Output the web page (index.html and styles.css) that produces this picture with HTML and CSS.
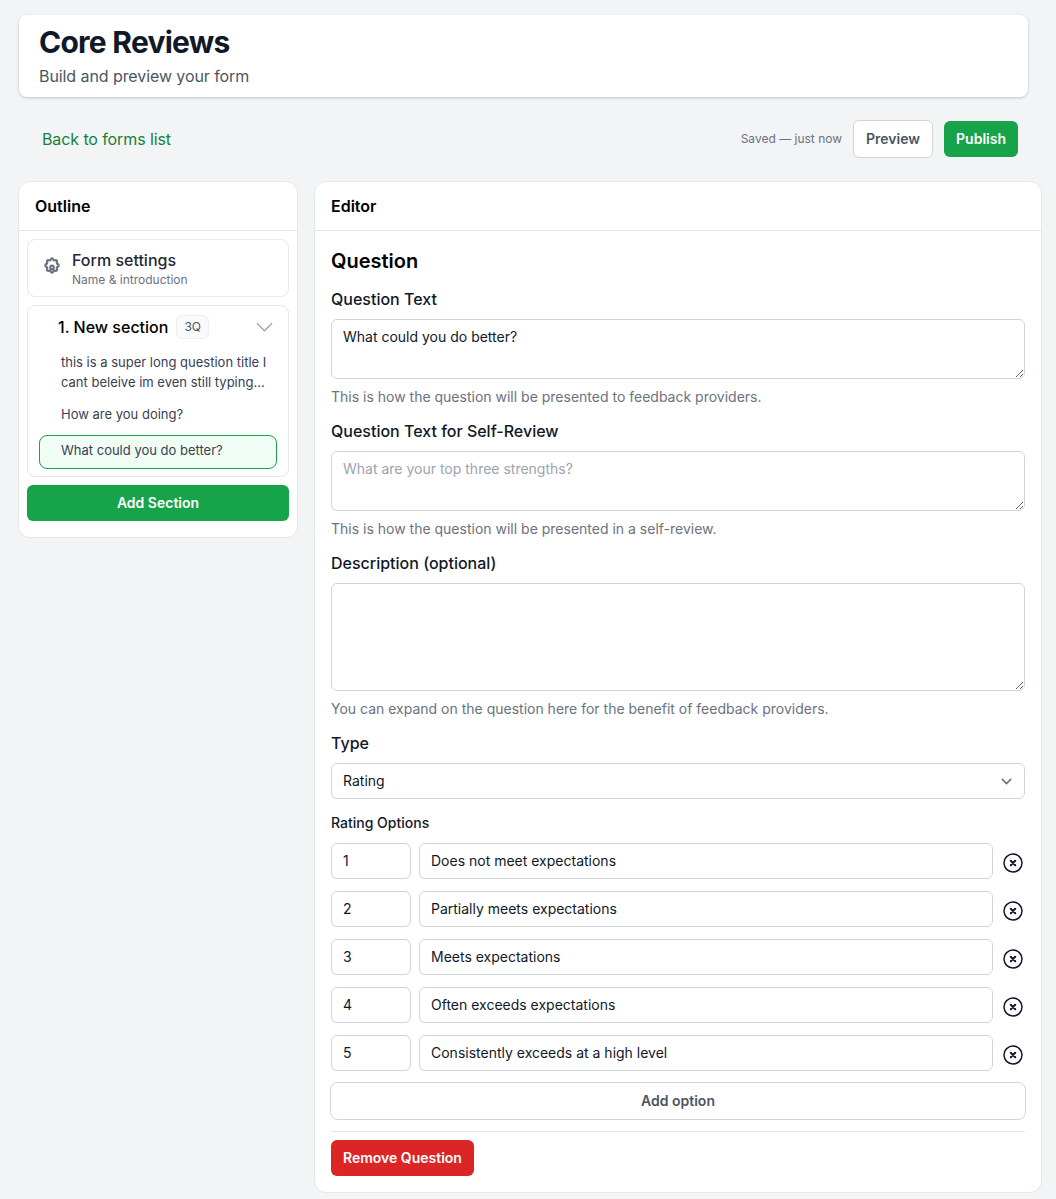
FILE: index.html
```html
<!DOCTYPE html>
<html lang="en">

<head>
    <meta charset="UTF-8">
    <meta name="viewport" content="width=device-width, initial-scale=1.0">
    <title>Core Reviews</title>

    <link rel="stylesheet" href="styles.css">
</head>

<body>
    <header class="page-head">
        <h1>Core Reviews</h1>
        <p>Build and preview your form</p>
    </header>

    <div class="toolbar">
        <a href="#" class="back-link">Back to forms list</a>
        <div class="toolbar-actions">
            <span class="saved">Saved — just now</span>
            <button class="btn btn-white">Preview</button>
            <button class="btn btn-green">Publish</button>
        </div>
    </div>

    <div class="columns">
        <aside class="card outline">
            <div class="card-head">Outline</div>
            <div class="outline-body">
                <div class="settings-item">
                    <svg class="gear" viewBox="0 0 24 24" preserveAspectRatio="none" fill="none" stroke="#6b7280" stroke-width="2.8" stroke-linecap="round" stroke-linejoin="round">
                        <path d="M10.325 4.317c.426-1.756 2.924-1.756 3.35 0a1.724 1.724 0 002.573 1.066c1.543-.94 3.31.826 2.37 2.37a1.724 1.724 0 001.065 2.572c1.756.426 1.756 2.924 0 3.35a1.724 1.724 0 00-1.066 2.573c.94 1.543-.826 3.31-2.37 2.37a1.724 1.724 0 00-2.572 1.065c-.426 1.756-2.924 1.756-3.35 0a1.724 1.724 0 00-2.573-1.066c-1.543.94-3.31-.826-2.37-2.37a1.724 1.724 0 00-1.065-2.572c-1.756-.426-1.756-2.924 0-3.35a1.724 1.724 0 001.066-2.573c-.94-1.543.826-3.31 2.37-2.37.996.608 2.296.07 2.572-1.065z"/>
                        <circle cx="12" cy="14.5" r="2.4"/>
                    </svg>
                    <div>
                        <div class="settings-title">Form settings</div>
                        <div class="settings-sub">Name &amp; introduction</div>
                    </div>
                </div>

                <div class="section-item">
                    <div class="section-head">
                        <span class="section-title">1. New section</span>
                        <span class="count-badge">3Q</span>
                        <svg class="section-chevron" viewBox="0 0 18 10" fill="none" stroke="#9ca3af" stroke-width="1.4">
                            <path d="M1 1l8 8 8-8"/>
                        </svg>
                    </div>
                    <div class="question-item">this is a super long question title I cant beleive im even still typing...</div>
                    <div class="question-item">How are you doing?</div>
                    <div class="question-item active">What could you do better?</div>
                </div>

                <button class="btn btn-green btn-block">Add Section</button>
            </div>
        </aside>

        <main class="card editor">
            <div class="card-head">Editor</div>
            <div class="editor-body">
                <h2>Question</h2>

                <label for="qText">Question Text</label>
                <textarea id="qText" class="h60">What could you do better?</textarea>
                <p class="help">This is how the question will be presented to feedback providers.</p>

                <label for="qSelf">Question Text for Self-Review</label>
                <textarea id="qSelf" class="h60" placeholder="What are your top three strengths?"></textarea>
                <p class="help">This is how the question will be presented in a self-review.</p>

                <label for="qDesc">Description (optional)</label>
                <textarea id="qDesc" class="h108"></textarea>
                <p class="help">You can expand on the question here for the benefit of feedback providers.</p>

                <label for="qType">Type</label>
                <div class="select-box" id="qType">
                    <span>Rating</span>
                    <svg viewBox="0 0 20 20" fill="none" stroke="#6b7280" stroke-width="1.5" stroke-linecap="round" stroke-linejoin="round">
                        <path d="M6 8l4 4 4-4"/>
                    </svg>
                </div>

                <div class="options-label">Rating Options</div>
                <div class="option-row">
                    <input class="opt-num" type="text" value="1">
                    <input class="opt-text" type="text" value="Does not meet expectations">
                    <svg class="opt-remove" viewBox="0 0 24 24" fill="none" stroke="#111827" stroke-width="1.5" stroke-linecap="round" stroke-linejoin="round"><path d="M21 12a9 9 0 1 1-18 0 9 9 0 0 1 18 0Z"/><path stroke-width="2" d="m9.75 9.75 4.5 4.5m0-4.5-4.5 4.5"/></svg>
                </div>
                <div class="option-row">
                    <input class="opt-num" type="text" value="2">
                    <input class="opt-text" type="text" value="Partially meets expectations">
                    <svg class="opt-remove" viewBox="0 0 24 24" fill="none" stroke="#111827" stroke-width="1.5" stroke-linecap="round" stroke-linejoin="round"><path d="M21 12a9 9 0 1 1-18 0 9 9 0 0 1 18 0Z"/><path stroke-width="2" d="m9.75 9.75 4.5 4.5m0-4.5-4.5 4.5"/></svg>
                </div>
                <div class="option-row">
                    <input class="opt-num" type="text" value="3">
                    <input class="opt-text" type="text" value="Meets expectations">
                    <svg class="opt-remove" viewBox="0 0 24 24" fill="none" stroke="#111827" stroke-width="1.5" stroke-linecap="round" stroke-linejoin="round"><path d="M21 12a9 9 0 1 1-18 0 9 9 0 0 1 18 0Z"/><path stroke-width="2" d="m9.75 9.75 4.5 4.5m0-4.5-4.5 4.5"/></svg>
                </div>
                <div class="option-row">
                    <input class="opt-num" type="text" value="4">
                    <input class="opt-text" type="text" value="Often exceeds expectations">
                    <svg class="opt-remove" viewBox="0 0 24 24" fill="none" stroke="#111827" stroke-width="1.5" stroke-linecap="round" stroke-linejoin="round"><path d="M21 12a9 9 0 1 1-18 0 9 9 0 0 1 18 0Z"/><path stroke-width="2" d="m9.75 9.75 4.5 4.5m0-4.5-4.5 4.5"/></svg>
                </div>
                <div class="option-row">
                    <input class="opt-num" type="text" value="5">
                    <input class="opt-text" type="text" value="Consistently exceeds at a high level">
                    <svg class="opt-remove" viewBox="0 0 24 24" fill="none" stroke="#111827" stroke-width="1.5" stroke-linecap="round" stroke-linejoin="round"><path d="M21 12a9 9 0 1 1-18 0 9 9 0 0 1 18 0Z"/><path stroke-width="2" d="m9.75 9.75 4.5 4.5m0-4.5-4.5 4.5"/></svg>
                </div>

                <button class="btn btn-white btn-add">Add option</button>
                <div class="editor-foot">
                    <button class="btn btn-red">Remove Question</button>
                </div>
            </div>
        </main>
    </div>
</body>

</html>
```

FILE: styles.css
```css
* {
    margin: 0;
    padding: 0;
    box-sizing: border-box;
}

body {
    background-color: #f3f4f6;
    font-family: Inter, "Liberation Sans", sans-serif;
    color: #111827;
    padding: 15px 14px 6px 18px;
}

.page-head {
    width: 1009px;
    margin-left: 1px;
    height: 82px;
    padding: 9px 20px;
    background-color: white;
    border-radius: 8px;
    box-shadow: 0 1px 3px rgba(0, 0, 0, .2);
}

.page-head h1 {
    font-size: 30px;
    line-height: 36px;
    font-weight: 700;
    letter-spacing: -.75px;
}

.page-head p {
    margin-top: 4px;
    font-size: 16px;
    line-height: 24px;
    letter-spacing: -.08px;
    color: #4b5563;
}

.toolbar {
    width: 976px;
    height: 36px;
    margin: 24px 0 24px 24px;
    display: flex;
    justify-content: space-between;
    align-items: center;
}

.back-link {
    font-size: 16px;
    letter-spacing: -.1px;
    color: #15803d;
    text-decoration: none;
}

.toolbar-actions {
    display: flex;
    align-items: center;
    gap: 11px;
}

.saved {
    margin-bottom: 1px;
    font-size: 12px;
    color: #6b7280;
}

.btn {
    font-family: inherit;
    font-size: 14px;
    font-weight: 600;
    border-radius: 6px;
    height: 36px;
    padding: 0 12px 2px;
    border: none;
}

.btn-green {
    background-color: #16a34a;
    color: white;
}

.btn-white {
    background-color: white;
    color: #4b5563;
    border: 1px solid #d1d5db;
    height: 38px;
}

.btn-red {
    background-color: #dc2626;
    color: white;
}

.btn-block {
    display: block;
    width: 100%;
}

.columns {
    display: flex;
    align-items: flex-start;
    gap: 16px;
}

.card {
    background-color: white;
    border: 1px solid #e5e7eb;
    border-radius: 12px;
}

.card-head {
    height: 49px;
    padding: 0 16px;
    line-height: 48px;
    font-size: 16px;
    font-weight: 600;
    color: black;
    border-bottom: 1px solid #e5e7eb;
}

.outline {
    width: 280px;
    flex-shrink: 0;
}

.outline-body {
    padding: 8px 8px 16px;
}

.settings-item {
    height: 58px;
    display: flex;
    align-items: center;
    gap: 11px;
    padding: 2px 15px 0;
    border: 1px solid #e5e7eb;
    border-radius: 8px;
}

.gear {
    width: 18px;
    height: 19px;
    margin-bottom: 8px;
    flex-shrink: 0;
}

.settings-title {
    font-size: 16px;
    line-height: 20px;
    font-weight: 500;
    color: #1f2937;
}

.settings-sub {
    margin-top: 2px;
    font-size: 12px;
    line-height: 16px;
    color: #6b7280;
}

.section-item {
    margin: 8px 0;
    padding: 0 11px 7px;
    border: 1px solid #e5e7eb;
    border-radius: 8px;
}

.section-head {
    height: 41px;
    display: flex;
    align-items: center;
    padding-left: 19px;
}

.section-title {
    font-size: 16px;
    font-weight: 500;
    color: black;
}

.count-badge {
    margin-left: 8px;
    padding: 0 7px;
    height: 24px;
    line-height: 22px;
    font-size: 12px;
    font-weight: 400;
    color: #4b5563;
    background-color: #f9fafb;
    border: 1px solid #eceef1;
    border-radius: 6px;
}

.section-chevron {
    width: 17px;
    height: 10px;
    margin-left: auto;
    margin-right: 4px;
}

.question-item {
    padding: 4px 8px 4px 21px;
    font-size: 13px;
    line-height: 20px;
    color: #374151;
    border: 1px solid transparent;
    border-radius: 8px;
}

.question-item + .question-item {
    margin-top: 2px;
}

.question-item + .question-item.active {
    margin-top: 6px;
    padding-bottom: 8px;
    background-color: #f0fdf4;
    border-color: #16a34a;
}

.editor {
    width: 728px;
}

.editor-body {
    padding: 16px;
}

.editor-body h2 {
    font-size: 20px;
    line-height: 28px;
    font-weight: 600;
    color: black;
}

.editor-body label {
    display: block;
    margin-top: 12px;
    font-size: 16px;
    line-height: 24px;
    font-weight: 500;
}

textarea,
input,
.select-box {
    font-family: inherit;
    font-size: 14px;
    color: #111827;
    background-color: white;
    border: 1px solid #d1d5db;
    border-radius: 6px;
    outline: none;
}

textarea {
    display: block;
    width: 100%;
    margin-top: 8px;
    padding: 7px 11px;
    line-height: 20px;
}

textarea::placeholder {
    color: #9ca3af;
}

.h60 {
    height: 60px;
}

.h108 {
    height: 108px;
}

.help {
    margin-top: 8px;
    font-size: 14px;
    line-height: 20px;
    color: #6b7280;
}

.select-box {
    margin-top: 8px;
    height: 36px;
    display: flex;
    justify-content: space-between;
    align-items: center;
    padding: 0 7px 0 11px;
}

.select-box span {
    margin-bottom: 2px;
}

.select-box svg {
    width: 21px;
    height: 21px;
}

.options-label {
    margin-top: 14px;
    font-size: 14px;
    line-height: 20px;
    font-weight: 500;
}

.option-row {
    margin-top: 10px;
    display: flex;
    align-items: center;
    gap: 8px;
}

.option-row + .option-row {
    margin-top: 12px;
}

.option-row input {
    height: 36px;
    padding: 0 11px 2px;
}

.opt-num {
    width: 80px;
}

.opt-text {
    flex: 1;
    min-width: 0;
}

.opt-remove {
    width: 24px;
    height: 24px;
    margin-top: 4px;
    flex-shrink: 0;
}

.btn-add {
    display: block;
    width: 696px;
    margin: 11px 0 0 -1px;
    border-radius: 8px;
}

.editor-foot {
    margin-top: 11px;
    padding-top: 8px;
    border-top: 1px solid #e5e7eb;
}
```
